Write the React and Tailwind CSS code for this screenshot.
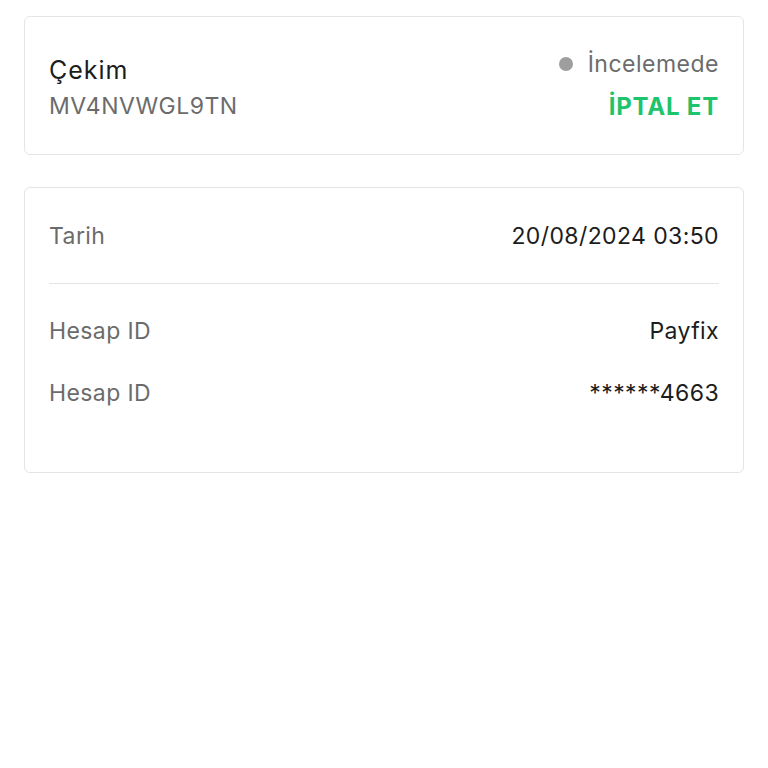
import React from 'react';

const Row = ({ label, value }) => (
  <div className="flex items-center justify-between text-[23px] leading-[28px] tracking-[0.4px]">
    <span className="text-[#6b6b6b]">{label}</span>
    <span className="text-[#1c1c1c]">{value}</span>
  </div>
);

const App = () => {
  return (
    <div className="min-h-screen bg-white px-6 pt-4 font-['Inter','Noto_Sans',sans-serif]">
      <div className="flex h-[139px] items-center justify-between rounded-md border border-[#e4e4e4] px-6">
        <div className="flex flex-col gap-[6px] pt-[3px]">
          <span className="text-[25px] leading-[32px] tracking-[1px] text-[#1c1c1c]">Çekim</span>
          <span className="text-[23px] leading-[28px] tracking-[0.5px] text-[#6b6b6b]">MV4NVWGL9TN</span>
        </div>
        <div className="flex flex-col items-end gap-[15px]">
          <div className="flex items-center gap-[15px] text-[23px] leading-[28px] tracking-[0.5px] text-[#6b6b6b]">
            <span className="h-[14px] w-[14px] rounded-full bg-[#9e9e9e]" />
            <span>İncelemede</span>
          </div>
          <button className="text-[24px] font-bold leading-[28px] tracking-[0.8px] text-[#1ec46b]">İPTAL ET</button>
        </div>
      </div>

      <div className="mt-8 rounded-md border border-[#e4e4e4] px-6 pt-[34px] pb-[65px]">
        <Row label="Tarih" value="20/08/2024 03:50" />
        <div className="my-[33px] h-px bg-[#e4e4e4]" />
        <div className="flex flex-col gap-[34px]">
          <Row label="Hesap ID" value="Payfix" />
          <Row label="Hesap ID" value="******4663" />
        </div>
      </div>
    </div>
  );
};

export default App;
